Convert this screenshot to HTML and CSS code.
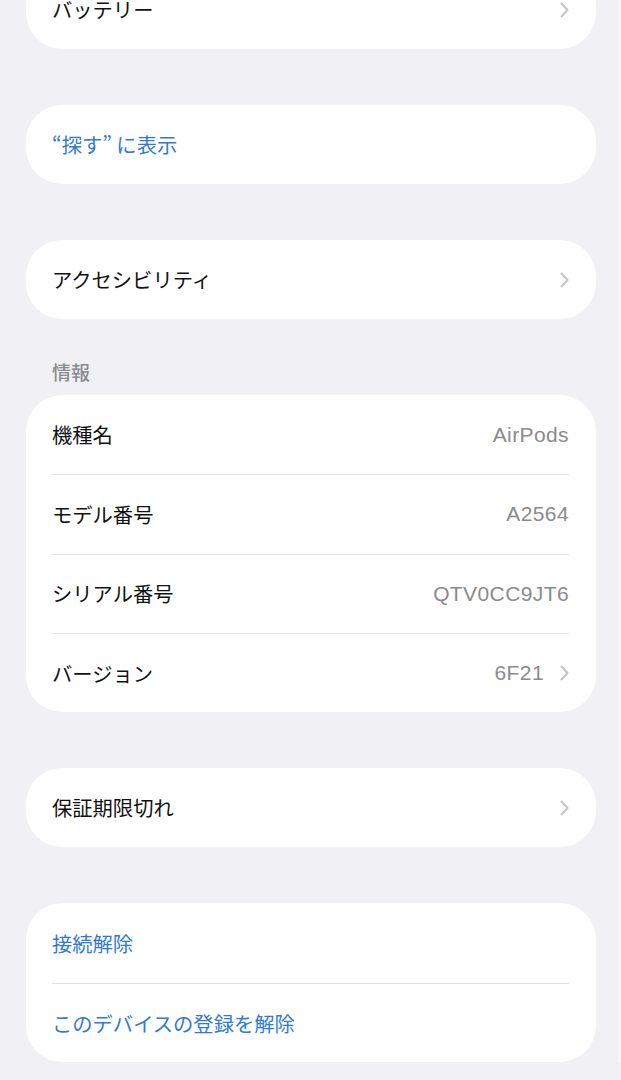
FILE: index.html
```html
<!DOCTYPE html>
<html lang="ja">
<head>
    <meta charset="UTF-8">
    <meta name="viewport" content="width=device-width, initial-scale=1.0">
    <title>AirPods</title>
    <link rel="stylesheet" href="styles.css">
</head>
<body>
    <div class="page">
        <section class="group group-first">
            <div class="row">
                <span class="label">バッテリー</span>
                <span class="chevron"><svg viewBox="0 0 9 16" width="9" height="16"><path d="M1.5 1.5 L7.5 8 L1.5 14.5"/></svg></span>
            </div>
        </section>

        <section class="group">
            <div class="row">
                <span class="label link">“探す” に表示</span>
            </div>
        </section>

        <section class="group">
            <div class="row">
                <span class="label">アクセシビリティ</span>
                <span class="chevron"><svg viewBox="0 0 9 16" width="9" height="16"><path d="M1.5 1.5 L7.5 8 L1.5 14.5"/></svg></span>
            </div>
        </section>

        <h2 class="group-title">情報</h2>
        <section class="group group-info">
            <div class="row">
                <span class="label">機種名</span>
                <span class="value">AirPods</span>
            </div>
            <div class="row">
                <span class="label">モデル番号</span>
                <span class="value">A2564</span>
            </div>
            <div class="row">
                <span class="label">シリアル番号</span>
                <span class="value">QTV0CC9JT6</span>
            </div>
            <div class="row">
                <span class="label">バージョン</span>
                <span class="value">6F21</span>
                <span class="chevron"><svg viewBox="0 0 9 16" width="9" height="16"><path d="M1.5 1.5 L7.5 8 L1.5 14.5"/></svg></span>
            </div>
        </section>

        <section class="group">
            <div class="row">
                <span class="label">保証期限切れ</span>
                <span class="chevron"><svg viewBox="0 0 9 16" width="9" height="16"><path d="M1.5 1.5 L7.5 8 L1.5 14.5"/></svg></span>
            </div>
        </section>

        <section class="group group-actions">
            <div class="row">
                <span class="label link">接続解除</span>
            </div>
            <div class="row">
                <span class="label link">このデバイスの登録を解除</span>
            </div>
        </section>
    </div>
</body>
</html>
```

FILE: styles.css
```css
:root {
    --bg: #f0f0f5;
    --card: #ffffff;
    --text: #111113;
    --muted: #8a8a8e;
    --link: #2f7ad6;
    --separator: #e2e2e6;
    --chevron: #c3c3c8;
}

* {
    box-sizing: border-box;
}

body {
    margin: 0;
    background-color: var(--bg);
    font-family: "Noto Sans CJK JP", "Liberation Sans", sans-serif;
    color: var(--text);
}

.page {
    padding: 0 22px 0 26px;
    border-right: 3px solid #f6f6f9;
    min-height: 1080px;
}

.group {
    background-color: var(--card);
    border-radius: 36px;
    margin: 0 0 56px;
    overflow: hidden;
}

.group-first {
    margin-top: -30px;
}

.group-title {
    height: 76px;
    margin: -56px 0 0;
    padding: 0 0 14px 26px;
    display: flex;
    align-items: flex-end;
    line-height: 1;
    font-size: 19px;
    font-weight: 500;
    color: var(--muted);
}

.row {
    display: flex;
    align-items: center;
    height: 79px;
    margin: 0 27px 0 26px;
}

.group-info .row {
    height: 79.25px;
}

.group-actions .row {
    height: 79.5px;
}

.row + .row {
    border-top: 1px solid var(--separator);
}

.label {
    flex: 1;
    font-size: 20.3px;
    line-height: 1;
}

.link {
    color: var(--link);
}

.value {
    font-family: "Liberation Sans", "Noto Sans CJK JP", sans-serif;
    font-size: 21px;
    letter-spacing: 0.4px;
    color: var(--muted);
}

.chevron {
    display: flex;
    width: 9px;
}

.value + .chevron {
    margin-left: 16px;
}

.chevron path {
    fill: none;
    stroke: var(--chevron);
    stroke-width: 2;
    stroke-linecap: round;
    stroke-linejoin: round;
}
```
